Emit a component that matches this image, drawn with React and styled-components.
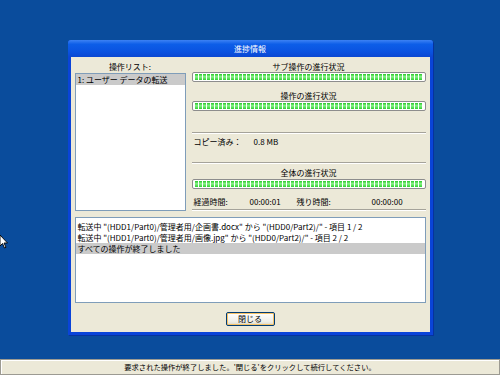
import React from "react";
import styled, { createGlobalStyle } from "styled-components";

const GlobalStyle = createGlobalStyle`
  html, body {
    margin: 0;
    padding: 0;
  }
  body {
    background: #0a4c9c;
    font-family: "Noto Sans CJK JP", "Liberation Sans", sans-serif;
    font-size: 8px;
    color: #000;
  }
`;

const Screen = styled.div`
  position: relative;
  width: 500px;
  height: 375px;
  display: flex;
  flex-direction: column;
  overflow: hidden;
`;

const Desktop = styled.div`
  flex: 1;
  display: flex;
  justify-content: center;
  align-items: flex-start;
  padding-top: 40px;
`;

const Window = styled.div`
  width: 365px;
  height: 295px;
  box-sizing: border-box;
  border: 3px solid #0a44d8;
  border-top: none;
  border-radius: 3px 3px 0 0;
  background: #ece9d8;
  display: flex;
  flex-direction: column;
  box-shadow: 1px 1px 0 #06339e;
`;

const TitleBar = styled.div`
  height: 17px;
  margin: 0 -3px;
  border-radius: 3px 3px 0 0;
  background: linear-gradient(to bottom, #3d82f4 0%, #0d5ee8 25%, #0a52e0 70%, #0a47d2 100%);
  color: #fff;
  font-size: 8px;
  line-height: 17px;
  text-align: center;
`;

const Body = styled.div`
  flex: 1;
  display: flex;
  flex-direction: column;
  padding: 4px 4px 7px 4px;
`;

const Top = styled.div`
  display: flex;
  gap: 6px;
`;

const LeftCol = styled.div`
  width: 111px;
  display: flex;
  flex-direction: column;
`;

const RightCol = styled.div`
  flex: 1;
  display: flex;
  flex-direction: column;
`;

const Caption = styled.div`
  height: 11px;
  line-height: 11px;
  text-align: center;
  white-space: nowrap;
  margin-top: ${(p) => p.$mt || 0}px;
`;

const ListBox = styled.div`
  height: 138px;
  margin-top: 1px;
  box-sizing: border-box;
  border: 1px solid #7f9db9;
  background: #fff;
`;

const Item = styled.div`
  height: 11px;
  line-height: 11px;
  padding-left: 2px;
  white-space: nowrap;
  background: ${(p) => (p.$selected ? "#cacaca" : "transparent")};
`;

const Bar = styled.div`
  height: 10px;
  box-sizing: border-box;
  margin-top: ${(p) => p.$mt || 0}px;
  border: 1px solid #8d8d8d;
  border-radius: 2px;
  background: #fff;
  padding: 1px 2px;
`;

const Fill = styled.div`
  height: 100%;
  background:
    repeating-linear-gradient(to right, transparent 0 3px, #fff 3px 4px),
    linear-gradient(to bottom, #27c727 0%, #8af28a 45%, #2fd02f 100%);
`;

const Rule = styled.div`
  height: 1px;
  margin-top: ${(p) => p.$mt || 0}px;
  background: #a5a39a;
  border-bottom: 1px solid #fff;
`;

const InfoRow = styled.div`
  display: grid;
  grid-template-columns: ${(p) => p.$cols};
  height: 11px;
  line-height: 11px;
  padding-left: 2px;
  margin-top: ${(p) => p.$mt || 0}px;
  white-space: nowrap;
`;

const LogBox = styled.div`
  height: 86px;
  margin-top: 6px;
  box-sizing: border-box;
  border: 1px solid #7f9db9;
  background: #fff;
  padding-top: 3px;
`;

const LogLine = styled.div`
  height: 11px;
  line-height: 11px;
  padding-left: 2px;
  white-space: nowrap;
  background: ${(p) => (p.$selected ? "#cacaca" : "transparent")};
`;

const ButtonRow = styled.div`
  display: flex;
  justify-content: center;
  margin-top: 9px;
`;

const Button = styled.button`
  width: 49px;
  height: 14px;
  padding: 0;
  font-family: inherit;
  font-size: 8px;
  line-height: 12px;
  color: #000;
  border: 1px solid #003c74;
  border-radius: 2px;
  background: linear-gradient(to bottom, #ffffff, #f0efe8 70%, #dcd8c8);
  box-shadow: inset 0 0 0 1px #f7c266;
`;

const StatusBar = styled.div`
  height: 16px;
  box-sizing: border-box;
  border: 1px solid #9c9a92;
  box-shadow: inset 1px 1px 0 #fff;
  background: #ece9d8;
  text-align: center;
  line-height: 14px;
  font-size: 7.3px;
  white-space: nowrap;
`;

const Cursor = styled.svg`
  position: absolute;
  left: -1px;
  top: 234px;
`;

function Progress({ mt }) {
  return (
    <Bar $mt={mt}>
      <Fill />
    </Bar>
  );
}

export default function App() {
  return (
    <>
      <GlobalStyle />
      <Screen>
        <Desktop>
          <Window>
            <TitleBar>進捗情報</TitleBar>
            <Body>
              <Top>
                <LeftCol>
                  <Caption>操作リスト:</Caption>
                  <ListBox>
                    <Item $selected>1: ユーザー データの転送</Item>
                  </ListBox>
                </LeftCol>
                <RightCol>
                  <Caption>サブ操作の進行状況</Caption>
                  <Progress />
                  <Caption $mt={8}>操作の進行状況</Caption>
                  <Progress />
                  <Rule $mt={21} />
                  <InfoRow $cols="60px auto" $mt={2}>
                    <span>コピー済み：</span>
                    <span>0.8 MB</span>
                  </InfoRow>
                  <Rule $mt={15} />
                  <Caption $mt={3}>全体の進行状況</Caption>
                  <Progress mt={1} />
                  <InfoRow $cols="56px 47px 75px auto" $mt={7}>
                    <span>経過時間:</span>
                    <span>00:00:01</span>
                    <span>残り時間:</span>
                    <span>00:00:00</span>
                  </InfoRow>
                  <Rule $mt={2} />
                </RightCol>
              </Top>
              <LogBox>
                <LogLine>転送中 "(HDD1/Part0)/管理者用/企画書.docx" から "(HDD0/Part2)/" - 項目 1 / 2</LogLine>
                <LogLine>転送中 "(HDD1/Part0)/管理者用/画像.jpg" から "(HDD0/Part2)/" - 項目 2 / 2</LogLine>
                <LogLine $selected>すべての操作が終了しました</LogLine>
              </LogBox>
              <ButtonRow>
                <Button>閉じる</Button>
              </ButtonRow>
            </Body>
          </Window>
        </Desktop>
        <StatusBar>要求された操作が終了しました。'閉じる'をクリックして続行してください。</StatusBar>
        <Cursor width="10" height="15" viewBox="0 0 10 15">
          <path d="M1 1 L1 12 L3.5 9.5 L5.5 14 L7 13.3 L5 9 L8.5 9 Z" fill="#fff" stroke="#000" strokeWidth="0.9" />
        </Cursor>
      </Screen>
    </>
  );
}
